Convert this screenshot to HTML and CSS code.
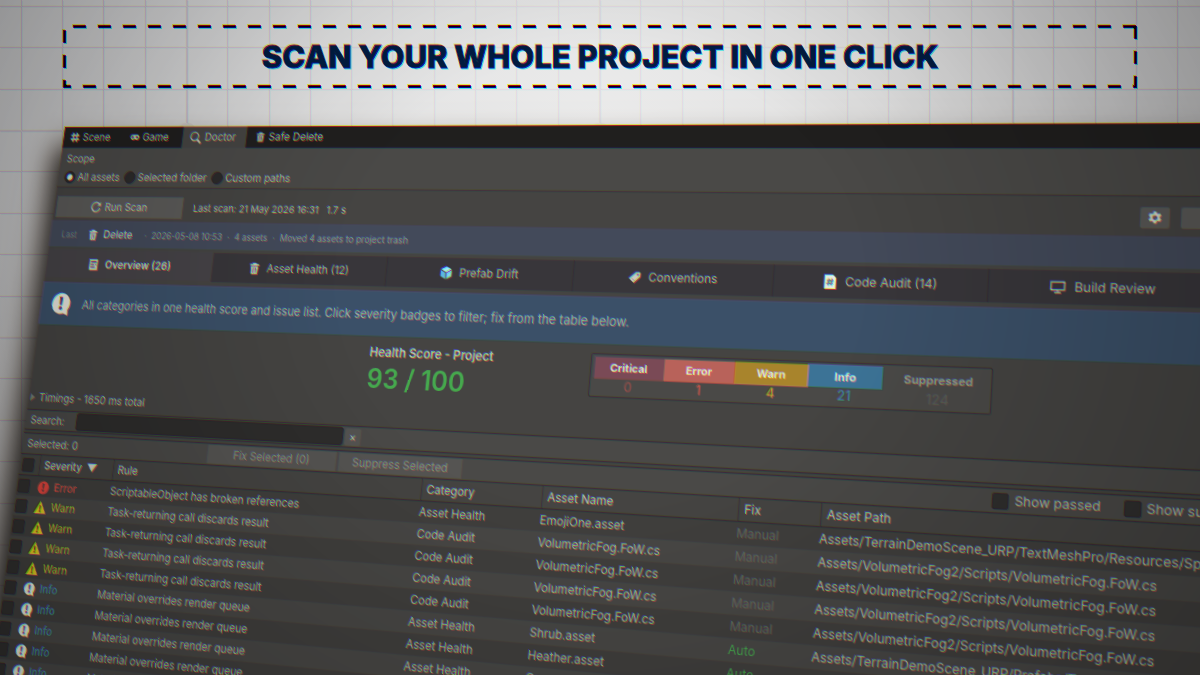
FILE: index.html
```html
<!DOCTYPE html>
<html lang="en">
<head>
<meta charset="utf-8">
<title>Scan your whole project in one click</title>
<link rel="stylesheet" href="styles.css">
</head>
<body>
<svg class="defs" aria-hidden="true">
  <defs>
    <filter id="fringe" x="0" y="0" width="100%" height="100%" color-interpolation-filters="sRGB">
      <feOffset in="SourceGraphic" dx="1" dy="1" result="down"/>
      <feOffset in="SourceGraphic" dx="-1" dy="-1" result="up"/>
      <feComposite in="SourceGraphic" in2="down" operator="arithmetic" k2=".3" k3=".7" result="down2"/>
      <feComposite in="SourceGraphic" in2="up" operator="arithmetic" k2=".3" k3=".7" result="up2"/>
      <feColorMatrix in="down2" values="1 0 0 0 0  0 0 0 0 0  0 0 0 0 0  0 0 0 1 0" result="r"/>
      <feColorMatrix in="SourceGraphic" values="0 0 0 0 0  0 1 0 0 0  0 0 0 0 0  0 0 0 1 0" result="g"/>
      <feColorMatrix in="up2" values="0 0 0 0 0  0 0 0 0 0  0 0 1 0 0  0 0 0 1 0" result="b"/>
      <feBlend in="r" in2="g" mode="screen" result="rg"/>
      <feBlend in="rg" in2="b" mode="screen"/>
    </filter>
    <symbol id="i-grid" viewBox="0 0 16 16"><path d="M5 1v14M11 1v14M1 5h14M1 11h14" stroke="currentColor" stroke-width="2.4" fill="none"/></symbol>
    <symbol id="i-game" viewBox="0 0 16 16"><path fill="currentColor" fill-rule="evenodd" d="M4.500 4a4 4 0 1 0 2.800 7h1.400a4 4 0 1 0 2.800-7zM3.500 6h1.600v1.200h1.300v1.600H5.100V10H3.500V8.800H2.200V7.200h1.300zM11.500 6.300a1.700 1.700 0 1 1 0 3.400 1.700 1.700 0 0 1 0-3.400z"/></symbol>
    <symbol id="i-search" viewBox="0 0 16 16"><circle cx="6.500" cy="6.500" r="5" fill="none" stroke="currentColor" stroke-width="1.500"/><path d="M10 10l5 5" stroke="currentColor" stroke-width="2.400"/></symbol>
    <symbol id="i-trash" viewBox="0 0 16 16"><path fill="currentColor" fill-rule="evenodd" d="M2 2.500h3.500V1h5v1.500H14v2H2zM3 5.500h10L12.300 15H3.700zM5.800 7l.3 6.500h.9V7zM9 7v6.500h.9l.3-6.500z"/></symbol>
    <symbol id="i-refresh" viewBox="0 0 16 16"><path d="M13.500 9.500a6 6 0 1 1-1.300-5.700" fill="none" stroke="currentColor" stroke-width="1.700"/><path d="M14.500 1v5.200H9.300z" fill="currentColor"/></symbol>
    <symbol id="i-list" viewBox="0 0 16 16"><path fill="currentColor" fill-rule="evenodd" d="M2 1h12v14H2zM4 3.500v1.600h8V3.500zM4 7v1.600h5V7zM4 10.500v1.600h6v-1.600zM10.500 7v1.600H12V7z"/></symbol>
    <symbol id="i-cube" viewBox="0 0 16 16"><path fill="#a4e4f6" d="M8 .5l6.800 3.300L8 7.300 1.200 3.800z"/><path fill="#5fb4e2" d="M1 4.800l6.500 3.400v7.500L1 12.200z"/><path fill="#86d0f0" d="M15 4.800L8.500 8.200v7.500l6.500-3.500z"/></symbol>
    <symbol id="i-tag" viewBox="0 0 16 16"><path fill="currentColor" d="M9.500 2H14l1 1v4.500L7.500 14.500 1.500 9z"/><circle cx="12" cy="5" r="1.100" fill="#38363a"/><path d="M5 9.500L8.500 12" stroke="#8c8a86" stroke-width="1"/></symbol>
    <symbol id="i-code" viewBox="0 0 16 16"><path fill="#e6e9e2" d="M2 0h9.500L15 3.500V16H2z"/><path d="M7.200 4.500L6 12M10.700 4.500L9.500 12M4.800 6.800h7M4.300 9.700h7" stroke="#3d6c60" stroke-width="1.400"/></symbol>
    <symbol id="i-monitor" viewBox="0 0 16 16"><path d="M1 2.500h14v8.500H1zM8 11v2.500" fill="none" stroke="currentColor" stroke-width="1.300"/><path d="M4.500 14h7" stroke="currentColor" stroke-width="1.500"/></symbol>
    <symbol id="i-gear" viewBox="0 0 16 16"><path fill="currentColor" fill-rule="evenodd" d="M6.600 1h2.800l.4 2 1.300.7 1.900-.7 1.400 2.400-1.500 1.400v1.500l1.500 1.400-1.400 2.400-1.900-.7-1.300.7-.4 2H6.600l-.4-2-1.300-.7-1.900.7-1.400-2.400 1.500-1.400V6.800L1.600 5.400 3 3l1.900.7L6.200 3zM8 5.300a2.500 2.500 0 1 0 0 5 2.500 2.500 0 0 0 0-5z"/></symbol>
    <symbol id="i-info" viewBox="0 0 16 16"><path fill="#e8e6df" d="M8 .5a7.200 7.200 0 0 1 5.700 11.600l.5 3.700-3.700-1.300A7.200 7.200 0 1 1 8 .5z"/><path fill="#4a4a55" d="M6.700 3h2.600l-.5 5.800H7.200z"/><circle cx="8" cy="10.900" r="1.300" fill="#4a4a55"/></symbol>
    <symbol id="i-error" viewBox="0 0 16 16"><circle cx="8" cy="8" r="7.500" fill="#e0463e"/><path fill="#3c3636" d="M6.800 3.200h2.400l-.5 5.500H7.300z"/><circle cx="8" cy="11.300" r="1.300" fill="#3c3636"/></symbol>
    <symbol id="i-warn" viewBox="0 0 16 16"><path fill="#e0c81e" d="M8 .5L15.800 15H.2z"/><path fill="#3a3720" d="M7 5.500h2l-.3 4.800H7.300z"/><circle cx="8" cy="12.300" r="1.100" fill="#3a3720"/></symbol>
  </defs>
</svg>

<main class="scene">
  <div class="grid"></div>
  <header class="banner"><h1>SCAN YOUR WHOLE PROJECT IN ONE CLICK</h1></header>

  <section class="panel">
    <nav class="docks">
      <button class="dock"><svg><use href="#i-grid"/></svg>Scene</button>
      <button class="dock"><svg><use href="#i-game"/></svg>Game</button>
      <button class="dock on"><svg><use href="#i-search"/></svg>Doctor</button>
      <button class="dock"><svg><use href="#i-trash"/></svg>Safe Delete</button>
    </nav>

    <fieldset class="scope">
      <legend>Scope</legend>
      <div class="radios">
        <label><input type="radio" name="scope" checked>All assets</label>
        <label><input type="radio" name="scope">Selected folder</label>
        <label><input type="radio" name="scope">Custom paths</label>
      </div>
    </fieldset>

    <div class="tools">
      <button class="run"><svg><use href="#i-refresh"/></svg>Run Scan</button>
      <span class="stamp">Last scan: 21 May 2026 16:31 &nbsp; 1.7 s</span>
      <button class="tool" aria-label="Settings"><svg><use href="#i-gear"/></svg></button>
      <button class="tool wide" aria-label="More"></button>
    </div>

    <div class="last">
      <span class="faint">Last</span>
      <svg><use href="#i-trash"/></svg>
      <strong>Delete</strong>
      <span class="meta"><span>·</span><span>2026-05-08 10:53</span><span>·</span><span>4 assets</span><span>·</span><span>Moved 4 assets to project trash</span></span>
    </div>

    <nav class="tabs">
      <button class="tab on"><svg><use href="#i-list"/></svg>Overview (26)</button>
      <button class="tab"><svg><use href="#i-trash"/></svg>Asset Health (12)</button>
      <button class="tab"><svg><use href="#i-cube"/></svg>Prefab Drift</button>
      <button class="tab"><svg><use href="#i-tag"/></svg>Conventions</button>
      <button class="tab"><svg><use href="#i-code"/></svg>Code Audit (14)</button>
      <button class="tab"><svg><use href="#i-monitor"/></svg>Build Review</button>
    </nav>

    <div class="help"><svg><use href="#i-info"/></svg><p>All categories in one health score and issue list. Click severity badges to filter; fix from the table below.</p></div>

    <div class="health">
      <div class="score"><h2>Health Score - Project</h2><output>93 / 100</output></div>
      <div class="badges">
        <button class="badge critical"><b>Critical</b><span>0</span></button>
        <button class="badge error"><b>Error</b><span>1</span></button>
        <button class="badge warn"><b>Warn</b><span>4</span></button>
        <button class="badge info"><b>Info</b><span>21</span></button>
        <button class="badge hidden"><b>Suppressed</b><span>124</span></button>
      </div>
    </div>

    <details class="timings"><summary>Timings - 1650 ms total</summary></details>

    <div class="search"><label for="q">Search:</label><input id="q" type="text"><button aria-label="Clear">×</button></div>

    <div class="bulk">
      <span class="count">Selected: 0</span>
      <button class="fix" disabled>Fix Selected (0)</button>
      <button class="suppress" disabled>Suppress Selected</button>
      <label class="show"><input type="checkbox">Show passed</label>
      <label><input type="checkbox">Show suppressed</label>
    </div>

    <table>
      <colgroup><col class="c-check"><col class="c-sev"><col class="c-rule"><col class="c-cat"><col class="c-name"><col class="c-fix"><col></colgroup>
      <thead><tr><th><input type="checkbox" aria-label="Select all"></th><th class="sorted">Severity <i></i></th><th>Rule</th><th>Category</th><th>Asset Name</th><th>Fix</th><th>Asset Path</th></tr></thead>
      <tbody>
        <tr><td><input type="checkbox" aria-label="Select"></td><td class="t-error"><svg><use href="#i-error"/></svg>Error</td><td>ScriptableObject has broken references</td><td>Asset Health</td><td>EmojiOne.asset</td><td class="manual">Manual</td><td>Assets/TerrainDemoScene_URP/TextMeshPro/Resources/Sprite Assets</td></tr>
        <tr><td><input type="checkbox" aria-label="Select"></td><td class="t-warn"><svg><use href="#i-warn"/></svg>Warn</td><td>Task-returning call discards result</td><td>Code Audit</td><td>VolumetricFog.FoW.cs</td><td class="manual">Manual</td><td>Assets/VolumetricFog2/Scripts/VolumetricFog.FoW.cs</td></tr>
        <tr><td><input type="checkbox" aria-label="Select"></td><td class="t-warn"><svg><use href="#i-warn"/></svg>Warn</td><td>Task-returning call discards result</td><td>Code Audit</td><td>VolumetricFog.FoW.cs</td><td class="manual">Manual</td><td>Assets/VolumetricFog2/Scripts/VolumetricFog.FoW.cs</td></tr>
        <tr><td><input type="checkbox" aria-label="Select"></td><td class="t-warn"><svg><use href="#i-warn"/></svg>Warn</td><td>Task-returning call discards result</td><td>Code Audit</td><td>VolumetricFog.FoW.cs</td><td class="manual">Manual</td><td>Assets/VolumetricFog2/Scripts/VolumetricFog.FoW.cs</td></tr>
        <tr><td><input type="checkbox" aria-label="Select"></td><td class="t-warn"><svg><use href="#i-warn"/></svg>Warn</td><td>Task-returning call discards result</td><td>Code Audit</td><td>VolumetricFog.FoW.cs</td><td class="manual">Manual</td><td>Assets/VolumetricFog2/Scripts/VolumetricFog.FoW.cs</td></tr>
        <tr><td><input type="checkbox" aria-label="Select"></td><td class="t-info"><svg><use href="#i-info"/></svg>Info</td><td>Material overrides render queue</td><td>Asset Health</td><td>Shrub.asset</td><td class="auto">Auto</td><td>Assets/TerrainDemoScene_URP/Prefabs/Trees</td></tr>
        <tr><td><input type="checkbox" aria-label="Select"></td><td class="t-info"><svg><use href="#i-info"/></svg>Info</td><td>Material overrides render queue</td><td>Asset Health</td><td>Heather.asset</td><td class="auto">Auto</td><td></td></tr>
        <tr><td><input type="checkbox" aria-label="Select"></td><td class="t-info"><svg><use href="#i-info"/></svg>Info</td><td>Material overrides render queue</td><td>Asset Health</td><td>Grass.asset</td><td></td><td></td></tr>
        <tr><td><input type="checkbox" aria-label="Select"></td><td class="t-info"><svg><use href="#i-info"/></svg>Info</td><td>Material overrides render queue</td><td></td><td></td><td></td><td></td></tr>
        <tr><td><input type="checkbox" aria-label="Select"></td><td class="t-info"><svg><use href="#i-info"/></svg>Info</td><td>Material overrides render queue</td><td></td><td></td><td></td><td></td></tr>
        <tr><td></td><td></td><td></td><td></td><td></td><td></td><td></td></tr>
      </tbody>
    </table>
  </section>
  <div class="vignette"></div>
</main>
</body>
</html>
```
FILE: styles.css
```css
* { box-sizing: border-box; }

body {
  margin: 0;
  height: 100vh;
  overflow: hidden;
  font-family: Inter, "Liberation Sans", sans-serif;
  background: #a9a9aa;
}

.defs { position: absolute; width: 0; height: 0; }

/* Bleeds 4px past the window so that the colour fringe has no visible rim */
.scene {
  position: relative;
  height: calc(100vh + 8px);
  margin: -4px;
  padding: 29px 4px 0;
  overflow: hidden;
  background: radial-gradient(ellipse 60% 90% at 50% 22%, #ececec 0%, #e2e2e2 40%, #c3c3c4 80%, #b4b4b5 100%);
  filter: url(#fringe);
}

.grid {
  position: absolute;
  inset: 4px 0 0 4px;
  background-image:
    radial-gradient(circle at 8px 8px, #bdb9ba 8px, transparent 9px),
    linear-gradient(90deg, #9a97a2 2px, transparent 2px),
    linear-gradient(#a8a2a6 2px, transparent 2px),
    repeating-linear-gradient(90deg, #8f8c98 0 1px, transparent 1px 10%),
    repeating-linear-gradient(#988f96 0 1px, transparent 1px 20%);
  background-size: 413px 413px, 413px 100%, 100% 207px, 413px 100%, 100% 207px;
  background-position: 179px 123px, 186px 0, 0 130px, 186px 0, 0 130px;
  -webkit-mask-image: radial-gradient(ellipse 55% 100% at 50% 20%, rgba(0, 0, 0, .15) 30%, rgba(0, 0, 0, .6) 100%);
  mask-image: radial-gradient(ellipse 55% 100% at 50% 20%, rgba(0, 0, 0, .15) 30%, rgba(0, 0, 0, .6) 100%);
}

.vignette {
  position: absolute;
  inset: 0;
  pointer-events: none;
  background: radial-gradient(ellipse 62% 95% at 50% 42%, transparent 35%, rgba(0, 0, 0, .25) 100%);
}

.banner {
  position: relative;
  display: flex;
  align-items: center;
  justify-content: center;
  height: 63px;
  margin: 0 63px;
  background-image:
    linear-gradient(90deg, #05050a 13px, transparent 13px),
    linear-gradient(90deg, #05050a 13px, transparent 13px),
    linear-gradient(#05050a 13px, transparent 13px),
    linear-gradient(#05050a 13px, transparent 13px);
  background-size: 25px 3px, 25px 3px, 3px 25px, 3px 25px;
  background-repeat: repeat-x, repeat-x, repeat-y, repeat-y;
  background-position: 10px 0, 20px 100%, 0 5px, 100% 1px;
}

.banner h1 {
  margin: 0;
  font-size: 31px;
  line-height: 40px;
  font-weight: 800;
  color: #021c40;
  -webkit-text-stroke: 1px #021c40;
  white-space: nowrap;
}

/* Editor window seen at an angle */
.panel {
  position: relative;
  margin: 39px -165px 0 65px;
  transform-origin: 0 0;
  transform: matrix3d(.7636, -.0027, 0, -.0001499, -.11477, .8591, 0, -.00007477, 0, 0, 1, 0, 0, 0, 0, 1);
  background: #454442;
  color: #bbb9b3;
  font-size: 12px;
  line-height: 16px;
  box-shadow: -8px 24px 32px 2px rgba(0, 0, 0, .85);
}

button, input { font: inherit; color: inherit; margin: 0; }
button { border: 0; padding: 0; background: none; }
svg { display: block; width: 14px; height: 14px; flex: none; }

.docks { display: flex; height: 24px; background: #201f1e; }
.dock { display: flex; align-items: center; gap: 4px; padding: 0 9px; }
.dock + .dock { padding: 0 17px 0 16px; }
.dock svg { width: 12px; height: 12px; }
.dock + .dock.on { background: #454442; padding: 0 13px 0 9px; }
.dock.on svg { width: 15px; height: 15px; }
.dock.on + .dock { padding-left: 11px; }

.scope {
  margin: 0;
  border: 0;
  padding: 5px 8px 3px;
  background: #4a4947;
  border-bottom: 1px solid #35322f;
}
.scope legend { float: left; width: 100%; padding: 0; margin-bottom: 5px; }
.radios { clear: both; display: flex; gap: 6px; }
.radios label { display: flex; align-items: center; gap: 3px; }
input[type="radio"] {
  appearance: none;
  width: 14px;
  height: 14px;
  border-radius: 50%;
  background: #2c2b2a;
  border: 1px solid #232221;
}
input[type="radio"]:checked { background: radial-gradient(circle, #dcdcdc 3px, #2c2b2a 4px); }

.tools { display: flex; align-items: flex-start; padding: 10px 3px 4px; }
.run {
  display: flex;
  align-items: center;
  justify-content: center;
  gap: 4px;
  width: 160px;
  height: 24px;
  background: #5b5a58;
  color: #c4c2bd;
}
.stamp { margin: 4px auto 0 13px; font-size: 11px; }
.tool { display: grid; place-items: center; width: 26px; height: 20px; background: #5b5a58; color: #d6d4cf; border-radius: 2px; }
.tool.wide { width: 95px; margin-left: 10px; }

.last { display: flex; align-items: center; height: 30px; padding-left: 14px; background: #434a5a; font-size: 12px; }
.last strong { font-weight: 500; color: #c4c4c4; margin-left: 7px; }
.last svg { width: 13px; height: 13px; color: #d4d4d0; margin-left: 14px; }
.last .faint { font-size: 10px; color: #7a7f88; }
.last .meta { display: flex; gap: 6px; margin-left: 15px; font-size: 10px; color: #9b9ea3; }

.tabs { display: flex; height: 32px; margin: 3px 0 5px; padding-left: 2px; background: #38363a; }
.tab {
  display: flex;
  align-items: center;
  justify-content: center;
  gap: 8px;
  width: 206px;
  box-shadow: inset -1px 0 #302e30;
}
.tab.on { background: #464347; color: #d2d0cb; font-weight: 600; box-shadow: -2px 0 #464347; }
.tab svg { color: #c9c7c2; }

.help { display: flex; align-items: center; gap: 14px; height: 48px; padding: 0 12px; background: #3b5068; }
.help svg { width: 26px; height: 26px; }
.help p { margin: 0; font-size: 13px; color: #b2b5b3; }

.health { display: flex; align-items: flex-start; gap: 104px; height: 73px; padding: 8px 0 0 404px; }
.score { width: 138px; white-space: nowrap; }
.score h2 { margin: 0 0 2px; font-size: 13px; line-height: 16px; font-weight: 600; color: #c9c7c2; }
.score output { display: block; font-size: 28px; line-height: 36px; font-weight: 600; color: #46a850; }
.badges { display: flex; padding: 2px 3px 3px; margin-top: 1px; border: 1px solid #302f2e; background: #4a4947; border-radius: 2px; }
.badge { width: 72px; text-align: center; }
.badge b { display: block; font-size: 11px; line-height: 22px; font-weight: 700; color: #eae6e0; }
.badge span { display: block; font-size: 13px; line-height: 15px; font-weight: 500; }
.critical b { background: #7a4a56; }
.critical span { color: #94504e; }
.error b { background: #b8625a; }
.error span { color: #d0584e; }
.warn b { background: #a8842c; }
.warn span { color: #c79a2c; }
.info b { background: #3c7396; }
.info span { color: #3f82ac; }
.badge.hidden { width: 98px; padding-left: 6px; }
.hidden b { color: #9c9a96; }
.hidden span { color: #5b5a58; }

.timings { margin-bottom: 5px; }
.timings summary { display: flex; align-items: center; gap: 5px; padding-left: 2px; list-style: none; }
.timings summary::before { content: ""; border-left: 6px solid #7c7a77; border-top: 4px solid transparent; border-bottom: 4px solid transparent; }

.search {
  display: flex;
  align-items: center;
  gap: 2px;
  height: 23px;
  margin-bottom: 3px;
  background: #4a4947;
  border-top: 1px solid #2c2b2a;
  border-bottom: 1px solid #2c2b2a;
}
.search label { width: 62px; padding-left: 6px; }
.search input { width: 320px; height: 19px; border: 1px solid #262524; border-radius: 3px; background: #2e2d2c; }
.search button { width: 18px; height: 18px; background: #545351; border-radius: 2px; line-height: 16px; }

.bulk { display: flex; align-items: center; height: 23px; background: #4a4947; border-top: 1px solid #2c2b2a; padding-right: 17px; }
.count { width: 229px; padding-left: 6px; }
.bulk button { height: 20px; background: #555452; color: #94928e; }
.fix { width: 150px; margin-right: 3px; }
.suppress { width: 137px; }
.bulk label { display: flex; align-items: center; gap: 5px; margin-left: 20px; }
.bulk .show { margin-left: auto; }
input[type="checkbox"] { appearance: none; display: block; width: 15px; height: 15px; background: #302f2e; border: 1px solid #292827; border-radius: 2px; }

table { width: 100%; table-layout: fixed; border-collapse: separate; border-spacing: 0; }
.c-check { width: 25px; }
.c-sev { width: 92px; }
.c-rule { width: 360px; }
.c-cat { width: 130px; }
.c-name { width: 200px; }
.c-fix { width: 80px; }
th {
  height: 24px;
  padding: 0 0 0 6px;
  text-align: left;
  font-weight: 400;
  color: #c8c6c1;
  background: #454442;
  border-top: 1px solid #2c2b2a;
  border-bottom: 1px solid #2c2b2a;
  box-shadow: inset 1px 0 #343332;
}
th:first-child { padding-left: 3px; box-shadow: none; }
th.sorted { font-weight: 500; }
th i { display: inline-block; margin-left: 3px; border-top: 9px solid #d0cec9; border-left: 6px solid transparent; border-right: 6px solid transparent; }
td { height: 22px; padding: 0; white-space: nowrap; overflow: hidden; }
td:first-child { padding-left: 1px; }
td svg { display: inline-block; vertical-align: middle; width: 15px; height: 15px; margin-right: 6px; }
tbody tr:nth-child(odd) { background: #403f3d; }
tbody tr:nth-child(even) { background: #484745; }
.t-error { color: #df5248; font-weight: 500; }
.t-warn { color: #bcab30; font-weight: 500; }
.t-info { color: #3f89b4; font-weight: 500; }
.manual { color: #6a6966; }
.auto { color: #45a050; }
```
